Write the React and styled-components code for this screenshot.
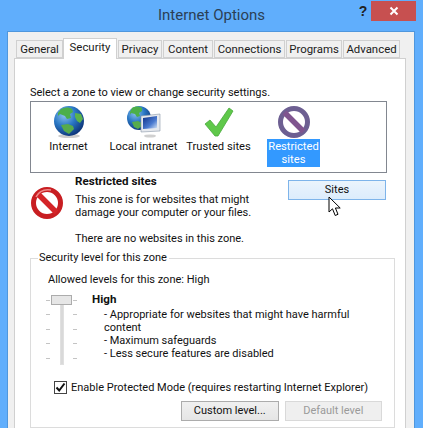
import React from "react";
import styled, { createGlobalStyle } from "styled-components";

const Global = createGlobalStyle`
  html, body { margin: 0; padding: 0; background: #60aefc; }
  #root { width: 423px; height: 428px; overflow: hidden; }
  * { box-sizing: border-box; }
`;
const Win = styled.div`
  position: relative; width: 423px; height: 428px; overflow: hidden;
  background: #60aefc; font-family: Roboto, "Noto Sans", sans-serif;
  font-size: 11px; color: #111; line-height: 13px;
`;
const TitleBar = styled.div`
  height: 31px; display: flex; align-items: flex-start; position: relative;
`;
const Title = styled.div`
  flex: 1; margin-left: 68px; text-align: center; font-size: 15px; line-height: 31px; color: #2b3f55;
`;
const Help = styled.div`
  width: 16px; margin-top: 3px; font: bold 14px/16px "Liberation Sans", sans-serif; color: #222; text-align: center;
`;
const Close = styled.div`
  width: 45px; height: 20px; margin: 1px 7px 0 0; background: #c75050; display: flex; align-items: center; justify-content: center;
`;
const Body = styled.div`
  margin: 0 8px 0 7px; height: 397px; background: #f0f0f0; border: 1px solid #4f97dd; border-bottom: 0; padding: 6px 8px 0 6px;
`;
const Tabs = styled.div`
  display: flex; align-items: flex-end; height: 21px; padding-left: 2px; position: relative; z-index: 1; margin-bottom: -1px;
`;
const Tab = styled.div`
  width: ${p => p.$w}px; height: ${p => p.$active ? 21 : 18}px; margin-bottom: ${p => p.$active ? 0 : 1}px;
  background: ${p => p.$active ? "#fff" : "#f0f0f0"};
  border: 1px solid #d0d0d0; border-bottom: ${p => p.$active ? 0 : "1px solid #d0d0d0"};
  margin-right: ${p => p.$gap ?? 1}px; font-size: 11.4px;
  text-align: center; line-height: ${p => p.$active ? 16 : 17}px; color: #1a1a1a; white-space: nowrap;
`;
const Panel = styled.div`
  height: 370px; background: #fff; border: 1px solid #d0d0d0; border-bottom: 0; padding: 27px 19px 0 15px;
`;
const ZoneLabel = styled.div` height: 15px; white-space: nowrap; line-height: 14px; `;
const ZoneBox = styled.div`
  display: flex; width: 357px; height: 72px; border: 1px solid #828790; padding-top: 2px;
`;
const Zone = styled.div`
  width: 75px; display: flex; flex-direction: column; align-items: center;
`;
const ZoneIcon = styled.div` height: 35px; display: flex; align-items: center; justify-content: center; `;
const ZoneText = styled.div`
  text-align: center; line-height: 13px; min-height: 28px; padding-top: 1px; white-space: nowrap; font-size: 11.2px;
  width: ${p => p.$sel ? "53px" : "auto"};
  background: ${p => p.$sel ? "#3399ff" : "transparent"}; color: ${p => p.$sel ? "#fff" : "#111"};
`;
const InfoRow = styled.div`
  display: flex; height: 85px; padding-top: 2px;
`;
const BigIcon = styled.div` width: 45px; padding: 12px 0 0 1px; `;
const Info = styled.div` flex: 1; `;
const Bold = styled.div` font-weight: 700; font-size: 11.6px; line-height: 13px; `;
const Para = styled.p` margin: ${p => p.$mt}px 0 0; line-height: 13px; `;
const Btn = styled.div`
  width: 98px; height: 20px; border: 1px solid #acacac; background: linear-gradient(#f0f0f0, #e5e5e5);
  text-align: center; line-height: 17px; white-space: nowrap;
`;
const HotBtn = styled(Btn)`
  margin: 5px 0 0 0; border-color: #7eb4ea; background: linear-gradient(#ebf4fc, #dcecfc);
`;
const DisabledBtn = styled(Btn)`
  border-color: #d9d9d9; background: #efefef; color: #9a9a9a;
`;
const Fieldset = styled.div`
  position: relative; width: 365px; height: 170px; border: 1px solid #dcdcdc; padding: 14px 12px 0 17px;
`;
const Legend = styled.div`
  position: absolute; top: -8px; left: 7px; background: #fff; padding: 0 2px 0 1px; white-space: nowrap;
`;
const Allowed = styled.div` line-height: 13px; `;
const SliderRow = styled.div` display: flex; margin-top: 9px; height: 77px; `;
const Slider = styled.div` width: 47px; margin-left: -2px; position: relative; height: 71px; `;
const Track = styled.div`
  position: absolute; left: 14px; top: 1px; width: 4px; height: 69px; background: #d9d9d9; border: 1px solid #e0e0e0;
`;
const Thumb = styled.div`
  position: absolute; left: 5px; top: 0; width: 21px; height: 10px; background: #e6e6e6; border: 1px solid #acacac;
`;
const Tick = styled.div`
  position: absolute; left: ${p => p.$x}px; top: ${p => p.$y}px; width: 4px; height: 1px; background: #c4c4c4;
`;
const Level = styled.div` flex: 1; margin-top: -2px; `;
const Desc = styled.div` padding-left: 12px; margin-top: 2px; line-height: 13px; width: 290px; white-space: pre-line; `;
const CheckRow = styled.div` display: flex; align-items: center; margin: 9px 0 0 6px; gap: 4px; white-space: nowrap; `;
const Box = styled.div`
  width: 13px; height: 13px; border: 1px solid #444; background: #fff; display: flex; align-items: center; justify-content: center;
`;
const BtnRow = styled.div` display: flex; gap: 6px; margin: 7px 0 0 133px; `;
const Cursor = styled.svg` position: absolute; left: 328px; top: 196px; `;

const Globe = ({ id }) => (
  <svg width="32" height="34" viewBox="0 0 32 34">
    <defs>
      <radialGradient id={id} cx="35%" cy="30%" r="75%">
        <stop offset="0" stopColor="#8ec4f0" />
        <stop offset="0.5" stopColor="#2a77c4" />
        <stop offset="1" stopColor="#0c3276" />
      </radialGradient>
    </defs>
    <ellipse cx="16" cy="31" rx="11" ry="2" fill="#ccc" />
    <circle cx="16" cy="16" r="15" fill={`url(#${id})`} />
    <path d="M8 4c4-2 8-2 11 0l1 3-3 2 1 4-4 1-2-3-5-2-2 2 0-3z" fill="#4caf4a" />
    <path d="M22 8l6 1 2 5-3 4-3-2-2-4z" fill="#5bb34d" />
    <path d="M8 20l7-1 5 2 1 3-5 5-5-3z" fill="#56ab4c" />
  </svg>
);

const Prohibit = ({ ring, bar, hi }) => (
  <svg width="32" height="32" viewBox="0 0 32 32">
    <circle cx="16" cy="16" r="13.5" fill="#fff" stroke={ring} strokeWidth="5" />
    <path d="M6.5 6.5L25.5 25.5" stroke={bar} strokeWidth="5.5" />
    {hi && <path d="M5 10C8 4 14 2 20 3" stroke={hi} strokeWidth="1.5" fill="none" />}
  </svg>
);

export default function App() {
  return (
    <Win>
      <Global />
      <TitleBar>
        <Title>Internet Options</Title>
        <Help>?</Help>
        <Close>
          <svg width="10" height="10" viewBox="0 0 10 10"><path d="M1.5 1.5L8.5 8.5M8.5 1.5L1.5 8.5" stroke="#fff" strokeWidth="2" /></svg>
        </Close>
      </TitleBar>
      <Body>
        <Tabs>
          <Tab $w={47} $gap={0}>General</Tab>
          <Tab $w={54} $active>Security</Tab>
          <Tab $w={44}>Privacy</Tab>
          <Tab $w={50}>Content</Tab>
          <Tab $w={71}>Connections</Tab>
          <Tab $w={56}>Programs</Tab>
          <Tab $w={57}>Advanced</Tab>
        </Tabs>
        <Panel>
          <ZoneLabel>Select a zone to view or change security settings.</ZoneLabel>
          <ZoneBox>
            <Zone>
              <ZoneIcon><Globe id="g1" /></ZoneIcon>
              <ZoneText>Internet</ZoneText>
            </Zone>
            <Zone>
              <ZoneIcon>
                <svg width="34" height="34" viewBox="0 0 34 34">
                  <defs>
                    <radialGradient id="g2" cx="35%" cy="30%" r="75%">
                      <stop offset="0" stopColor="#8ec4f0" /><stop offset="0.5" stopColor="#2a77c4" /><stop offset="1" stopColor="#0c3276" />
                    </radialGradient>
                    <linearGradient id="scr" x1="0" y1="0" x2="1" y2="1">
                      <stop offset="0" stopColor="#0d2f86" /><stop offset="0.6" stopColor="#4a7ad0" /><stop offset="1" stopColor="#d8e6f6" />
                    </linearGradient>
                  </defs>
                  <circle cx="12" cy="13" r="12" fill="url(#g2)" />
                  <path d="M5 3c3-2 7-2 10 0l0 3-3 2 1 3-3 1-2-3-4-1-1 2 0-3z" fill="#4caf4a" />
                  <path d="M5 17l6-1 4 2 0 3-4 3-4-2z" fill="#56ab4c" />
                  <path d="M14 11l19-2v17l-19 1z" fill="#e6e9ee" stroke="#8a97a8" strokeWidth="0.6" />
                  <path d="M16 13l14-2v12l-14 1z" fill="url(#scr)" />
                  <ellipse cx="23" cy="31" rx="6" ry="1.6" fill="#d0d0d0" />
                </svg>
              </ZoneIcon>
              <ZoneText>Local intranet</ZoneText>
            </Zone>
            <Zone>
              <ZoneIcon>
                <svg width="32" height="32" viewBox="0 0 32 32">
                  <path d="M2 18l5-4 6 7L26 2l4 3-15 25h-3z" fill="#5fc84a" stroke="#49a93c" strokeWidth="0.8" strokeLinejoin="round" />
                </svg>
              </ZoneIcon>
              <ZoneText>Trusted sites</ZoneText>
            </Zone>
            <Zone>
              <ZoneIcon><Prohibit ring="#6d5f92" bar="#80558f" /></ZoneIcon>
              <ZoneText $sel>Restricted<br />sites</ZoneText>
            </Zone>
          </ZoneBox>
          <InfoRow>
            <BigIcon><Prohibit ring="#c81e22" bar="#d42428" hi="#ee8a8a" /></BigIcon>
            <Info>
              <Bold>Restricted sites</Bold>
              <Para $mt={5}>This zone is for websites that might<br />damage your computer or your files.</Para>
              <Para $mt={13}>There are no websites in this zone.</Para>
            </Info>
            <HotBtn>Sites</HotBtn>
          </InfoRow>
          <Fieldset>
            <Legend>Security level for this zone</Legend>
            <Allowed>Allowed levels for this zone: High</Allowed>
            <SliderRow>
              <Slider>
                <Track />
                <Thumb />
                {[5, 19, 34, 48, 63].map(y => <React.Fragment key={y}><Tick $x={0} $y={y} /><Tick $x={27} $y={y} /></React.Fragment>)}
              </Slider>
              <Level>
                <Bold>High</Bold>
                <Desc>
                  - Appropriate for websites that might have harmful<br />
                  content<br />
                  - Maximum safeguards<br />
                  - Less secure features are disabled
                </Desc>
              </Level>
            </SliderRow>
            <CheckRow>
              <Box>
                <svg width="11" height="11" viewBox="0 0 11 11"><path d="M1.5 5.5L4.2 8.5L9.5 1.5" fill="none" stroke="#111" strokeWidth="2" /></svg>
              </Box>
              Enable Protected Mode (requires restarting Internet Explorer)
            </CheckRow>
            <BtnRow>
              <Btn>Custom level...</Btn>
              <DisabledBtn>Default level</DisabledBtn>
            </BtnRow>
          </Fieldset>
        </Panel>
      </Body>
      <Cursor width="14" height="22" viewBox="0 0 14 22">
        <path d="M1 1V16L4.5 12.8L7.2 19.5L10 18.3L7.4 12H12.2Z" fill="#fff" stroke="#000" strokeWidth="1" strokeLinejoin="round" />
      </Cursor>
    </Win>
  );
}
